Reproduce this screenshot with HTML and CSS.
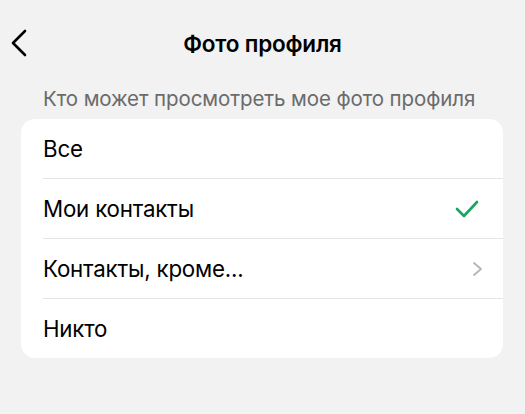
FILE: index.html
```html
<!DOCTYPE html>
<html lang="ru">
<head>
<meta charset="utf-8">
<link rel="stylesheet" href="styles.css">
</head>
<body>
<div class="screen">
  <header class="topbar">
    <button class="back" aria-label="Назад">
      <svg width="20" height="28" viewBox="0 0 20 28"><path d="M16 2 L4 14 L16 26" fill="none" stroke="#000" stroke-width="2.6" stroke-linecap="round" stroke-linejoin="round"/></svg>
    </button>
    <h1 class="title">Фото профиля</h1>
  </header>
  <p class="caption">Кто может просмотреть мое фото профиля</p>
  <ul class="list">
    <li class="row"><span class="label">Все</span></li>
    <li class="row"><span class="label">Мои контакты</span>
      <svg class="check" width="24" height="20" viewBox="0 0 24 20"><path d="M2 10 L9 17 L22 3" fill="none" stroke="#1aa563" stroke-width="2.6" stroke-linecap="round" stroke-linejoin="round"/></svg>
    </li>
    <li class="row"><span class="label">Контакты, кроме...</span>
      <svg class="chev" width="12" height="16" viewBox="0 0 12 16"><path d="M2 2 L9 8 L2 14" fill="none" stroke="#b5b5b5" stroke-width="1.8" stroke-linecap="round" stroke-linejoin="round"/></svg>
    </li>
    <li class="row"><span class="label">Никто</span></li>
  </ul>
</div>
</body>
</html>
```
FILE: styles.css
```css
* { box-sizing: border-box; }
html, body {
  margin: 0;
  padding: 0;
  background: #f2f2f2;
  font-family: Inter, "Noto Sans", sans-serif;
  color: #000;
}
.screen {
  width: 525px;
  height: 414px;
  padding: 0 21px 0 21px;
  display: flex;
  flex-direction: column;
}
.topbar {
  height: 87px;
  display: flex;
  align-items: center;
  justify-content: center;
  position: relative;
}
.back {
  position: absolute;
  left: -12px;
  top: 29px;
  border: 0;
  background: none;
  padding: 0;
  width: 20px;
  height: 28px;
}
.back svg { display: block; }
.title {
  margin: 0;
  font-size: 22.5px;
  font-weight: 600;
  letter-spacing: -0.2px;
}
.caption {
  margin: 0 0 9px 22px;
  font-size: 20.5px;
  line-height: 23px;
  color: #6b6b6b;
  letter-spacing: -0.1px;
  white-space: nowrap;
}
.list {
  list-style: none;
  margin: 0;
  padding: 0;
  background: #fff;
  border-radius: 14px;
  width: 482px;
}
.row {
  height: 60px;
  margin-left: 22px;
  padding-right: 21px;
  display: flex;
  align-items: center;
  justify-content: space-between;
  border-top: 1px solid #e5e5e5;
}
.row:first-child { border-top: 0; height: 59px; }
.label {
  font-size: 22.3px;
  letter-spacing: -0.2px;
}
.check { margin-right: 3px; }
.chev { margin-right: -2px; }
```
